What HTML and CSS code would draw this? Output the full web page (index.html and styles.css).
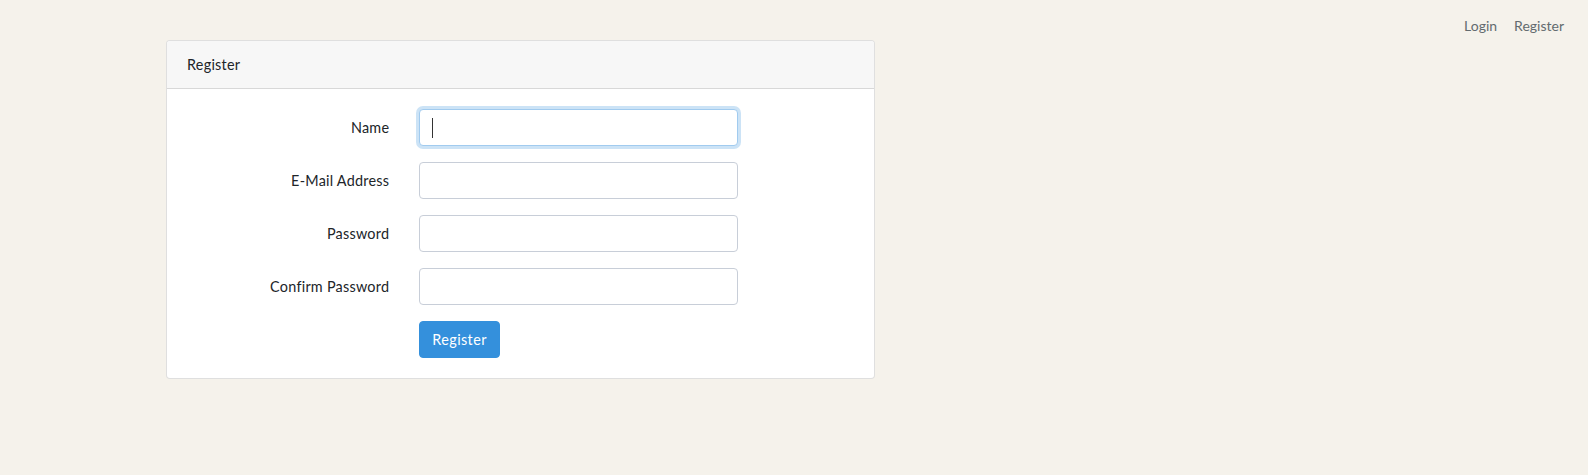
FILE: index.html
```html
<!DOCTYPE html>
<html lang="en">
<head>
  <meta charset="UTF-8" />
  <meta name="viewport" content="width=device-width, initial-scale=1">
  <title>Register</title>
  <link rel="stylesheet" href="styles.css">
</head>
<body>
  <nav class="top-links">
    <a href="#">Login</a>
    <a href="#">Register</a>
  </nav>

  <main class="page">
    <div class="card">
      <div class="card-header">Register</div>
      <div class="card-body">
        <form>
          <div class="form-row">
            <label class="form-label" for="name">Name</label>
            <div class="form-field">
              <input id="name" type="text" class="form-control is-focused">
              <span class="caret"></span>
            </div>
          </div>
          <div class="form-row">
            <label class="form-label" for="email">E-Mail Address</label>
            <div class="form-field">
              <input id="email" type="email" class="form-control">
            </div>
          </div>
          <div class="form-row">
            <label class="form-label" for="password">Password</label>
            <div class="form-field">
              <input id="password" type="password" class="form-control">
            </div>
          </div>
          <div class="form-row">
            <label class="form-label" for="password-confirm">Confirm Password</label>
            <div class="form-field">
              <input id="password-confirm" type="password" class="form-control">
            </div>
          </div>
          <div class="form-row last">
            <div class="form-label"></div>
            <div class="form-field">
              <button type="submit" class="btn-primary">Register</button>
            </div>
          </div>
        </form>
      </div>
    </div>
  </main>
</body>
</html>
```

FILE: styles.css
```css
/* Page */
body {
  margin: 0;
  padding: 0;
  background-color: #f5f2eb;
  color: #212529;
  font-family: Lato, "Open Sans", sans-serif;
  font-size: 14.4px;
  line-height: 1.6;
  letter-spacing: 0.25px;
}
/* Top right links */
.top-links {
  display: flex;
  justify-content: flex-end;
  gap: 17px;
  padding: 14px 24px 0 0;
  height: 26px;
  letter-spacing: 0;
}
.top-links a {
  color: #636b6f;
  text-decoration: none;
  font-family: Lato, sans-serif;
  font-size: 14px;
  line-height: 24px;
}
/* Layout */
.page {
  padding: 0 0 0 166px;
}
.card {
  box-sizing: border-box;
  width: 709px;
  background: #fff;
  border: 1px solid rgba(0, 0, 0, 0.125);
  border-radius: 4px;
}
.card-header {
  background-color: #f7f7f7;
  border-bottom: 1px solid rgba(0, 0, 0, 0.125);
  border-radius: 3px 3px 0 0;
  padding: 12px 20px;
  line-height: 23px;
}
.card-body {
  padding: 20px;
}
/* Form */
.form-row {
  display: flex;
  margin: 0 -15px 16px;
}
.form-row.last {
  margin-bottom: 0;
}
.form-label {
  box-sizing: border-box;
  width: 232.3px;
  padding: 7px 15px;
  text-align: right;
  line-height: 23px;
}
.form-field {
  position: relative;
  box-sizing: border-box;
  width: 348.5px;
  padding: 0 15px;
}
.form-control {
  display: block;
  box-sizing: border-box;
  width: 100%;
  height: 37px;
  padding: 6px 12px;
  font-family: inherit;
  font-size: 14.4px;
  color: #495057;
  background: #fff;
  border: 1px solid #c8ced8;
  border-radius: 4px;
  outline: none;
}
.form-control.is-focused,
.form-control:focus {
  border-color: #a1cbef;
  box-shadow: 0 0 0 3px rgba(52, 144, 220, 0.25);
}
/* Text cursor in the focused field */
.caret {
  position: absolute;
  left: 28px;
  top: 9px;
  width: 1px;
  height: 20px;
  background: #333;
}
.btn-primary {
  height: 37px;
  padding: 6px 12px;
  font-family: inherit;
  font-size: 14.4px;
  line-height: 23px;
  letter-spacing: 0.4px;
  color: #fff;
  background-color: #3490dc;
  border: 1px solid #3490dc;
  border-radius: 4px;
  cursor: pointer;
}
```
